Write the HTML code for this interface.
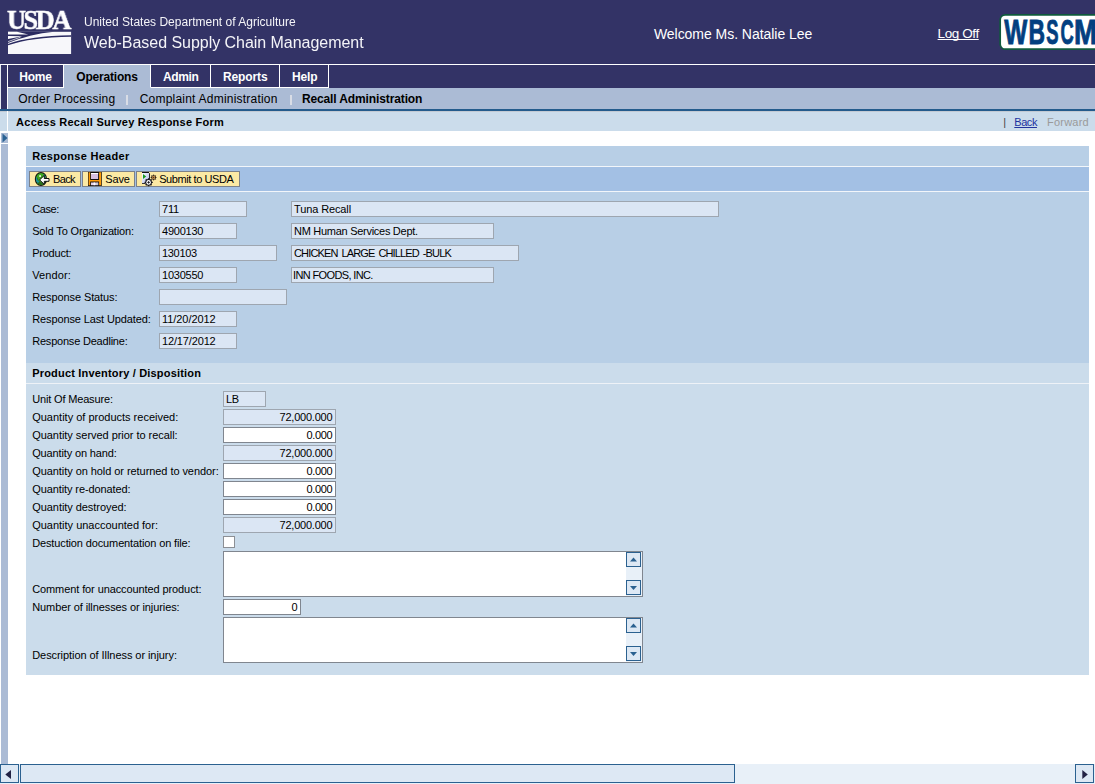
<!DOCTYPE html>
<html><head><meta charset="utf-8"><title>Access Recall Survey Response Form</title>
<style>
html,body{margin:0;padding:0;}
body{width:1095px;height:784px;overflow:hidden;position:relative;background:#fff;font-family:"Liberation Sans",sans-serif;font-size:11px;color:#000;}
.a{position:absolute;white-space:nowrap;}
.hdr{left:0;top:0;width:1095px;height:88px;background:#333366;}
.tab{top:65px;height:22px;border-right:1px solid #fff;border-bottom:1px solid #fff;}
.in{box-sizing:border-box;border:1px solid #9ea6b0;background:#dbe6f4;}
.in.e{background:#fff;border-color:#80868f;}
.btn{top:171px;height:16px;box-sizing:border-box;border:1px solid #7c8189;background:#fbe9a4;}
.sb{box-sizing:border-box;border:1px solid #2b6190;background:#dde8f4;width:15px;height:15px;}
</style></head><body>
<div class="a hdr"></div>
<div class="a" style="left:83.50px;top:15px;font-size:12px;line-height:14px;color:#f4f4f8;letter-spacing:0.004px;will-change:transform;">United States Department of Agriculture</div>
<div class="a" style="left:84.00px;top:34px;font-size:16px;line-height:17px;color:#f4f4f8;letter-spacing:-0.035px;will-change:transform;">Web-Based Supply Chain Management</div>
<div class="a" style="left:653.90px;top:26px;font-size:14px;line-height:16px;color:#fff;letter-spacing:-0.039px;">Welcome Ms. Natalie Lee</div>
<div class="a" style="left:937.60px;top:26px;font-size:13.5px;line-height:15px;color:#fff;letter-spacing:-0.414px;text-decoration:underline;text-decoration-skip-ink:none;text-underline-offset:1px;">Log Off</div>
<div class="a" style="left:0px;top:64px;width:1095px;height:1px;background:#fff;"></div>
<div class="a" style="left:0px;top:88px;width:8px;height:21px;background:#333366;"></div>
<div class="a" style="left:8px;top:88px;width:1087px;height:21px;background:#abbbd5;"></div>
<div class="a" style="left:0px;top:109px;width:1095px;height:2px;background:#245b8c;"></div>
<div class="a" style="left:0px;top:111px;width:1095px;height:1px;background:#c3cad3;"></div>
<div class="a" style="left:0px;top:65px;width:1px;height:44px;background:#e6ebf2;"></div>
<div class="a" style="left:7px;top:65px;width:1px;height:44px;background:#fff;"></div>
<div class="a tab" style="left:8px;width:55px;"></div>
<div class="a tab" style="left:64px;width:86px;background:#abbbd5;color:#000;border-bottom-color:#abbbd5;"></div>
<div class="a tab" style="left:151px;width:59px;"></div>
<div class="a tab" style="left:211px;width:68px;"></div>
<div class="a tab" style="left:280px;width:48px;"></div>
<div class="a" style="left:19.20px;top:70px;font-size:12px;line-height:14px;font-weight:bold;color:#fff;letter-spacing:-0.189px;">Home</div>
<div class="a" style="left:76.30px;top:70px;font-size:12px;line-height:14px;font-weight:bold;color:#000;letter-spacing:-0.197px;">Operations</div>
<div class="a" style="left:163.10px;top:70px;font-size:12px;line-height:14px;font-weight:bold;color:#fff;letter-spacing:-0.4px;">Admin</div>
<div class="a" style="left:223.00px;top:70px;font-size:12px;line-height:14px;font-weight:bold;color:#fff;letter-spacing:-0.128px;">Reports</div>
<div class="a" style="left:292.00px;top:70px;font-size:12px;line-height:14px;font-weight:bold;color:#fff;letter-spacing:-0.125px;">Help</div>
<div class="a" style="left:18.30px;top:92px;font-size:12px;line-height:14px;color:#000;letter-spacing:0.234px;">Order Processing</div>
<div class="a" style="left:126px;top:95px;width:2px;height:10px;background:#d9dde6;"></div>
<div class="a" style="left:139.70px;top:92px;font-size:12px;line-height:14px;color:#000;letter-spacing:0.217px;">Complaint Administration</div>
<div class="a" style="left:289.5px;top:95px;width:2px;height:10px;background:#d9dde6;"></div>
<div class="a" style="left:301.90px;top:92px;font-size:12px;line-height:14px;font-weight:bold;color:#000;letter-spacing:-0.121px;">Recall Administration</div>
<div class="a" style="left:0px;top:112px;width:1095px;height:19px;background:#cbdceb;"></div>
<div class="a" style="left:7px;top:111px;width:1px;height:20px;background:#fff;"></div>
<div class="a" style="left:16.10px;top:116px;font-size:11px;line-height:12px;font-weight:bold;letter-spacing:0.235px;">Access Recall Survey Response Form</div>
<div class="a" style="left:1003.20px;top:116px;font-size:11px;line-height:12px;color:#444;">|</div>
<div class="a" style="left:1014.30px;top:116px;font-size:11px;line-height:12px;color:#2233a0;letter-spacing:-0.452px;text-decoration:underline;text-decoration-skip-ink:none;">Back</div>
<div class="a" style="left:1047.10px;top:116px;font-size:11px;line-height:12px;color:#9a9a9a;letter-spacing:0.196px;">Forward</div>
<div class="a" style="left:1px;top:133px;width:7px;height:10px;background:#abbbd5;"></div>
<div class="a" style="left:1px;top:144px;width:7px;height:620px;background:#abbbd5;"></div>
<svg class="a" style="left:1px;top:133px;" width="7" height="10"><path d="M1.5 0.5 L6.5 5 L1.5 9.5 Z" fill="#2b6394"/></svg>
<div class="a" style="left:26px;top:146px;width:1063px;height:217px;background:#b8cfe6;"></div>
<div class="a" style="left:26px;top:166px;width:1063px;height:1px;background:#f2f6fa;"></div>
<div class="a" style="left:26px;top:167px;width:1063px;height:24px;background:#a3c0e4;"></div>
<div class="a" style="left:26px;top:191px;width:1063px;height:1px;background:#f2f6fa;"></div>
<div class="a" style="left:32.20px;top:150px;font-size:11px;line-height:12px;font-weight:bold;letter-spacing:0.29px;">Response Header</div>
<div class="a btn" style="left:29px;width:52px;"></div>
<div class="a btn" style="left:82px;width:53px;"></div>
<div class="a btn" style="left:136px;width:104px;"></div>
<div class="a" style="left:52.90px;top:173px;font-size:11px;line-height:12px;letter-spacing:-0.585px;">Back</div>
<div class="a" style="left:105.20px;top:173px;font-size:11px;line-height:12px;letter-spacing:-0.118px;">Save</div>
<div class="a" style="left:159.20px;top:173px;font-size:11px;line-height:12px;letter-spacing:-0.419px;">Submit to USDA</div>
<div class="a" style="left:32.20px;top:203px;font-size:11px;line-height:12px;letter-spacing:-0.42px;">Case:</div>
<div class="a in" style="left:159px;top:201px;width:88px;height:16px;"></div>
<div class="a" style="left:162.00px;top:203px;font-size:11px;line-height:12px;letter-spacing:-0.209px;">711</div>
<div class="a in" style="left:291px;top:201px;width:428px;height:16px;"></div>
<div class="a" style="left:294.00px;top:203px;font-size:11px;line-height:12px;letter-spacing:-0.114px;">Tuna Recall</div>
<div class="a" style="left:32.20px;top:225px;font-size:11px;line-height:12px;letter-spacing:-0.156px;">Sold To Organization:</div>
<div class="a in" style="left:159px;top:223px;width:78px;height:16px;"></div>
<div class="a" style="left:162.00px;top:225px;font-size:11px;line-height:12px;letter-spacing:-0.234px;">4900130</div>
<div class="a in" style="left:291px;top:223px;width:203px;height:16px;"></div>
<div class="a" style="left:294.00px;top:225px;font-size:11px;line-height:12px;letter-spacing:-0.28px;">NM Human Services Dept.</div>
<div class="a" style="left:32.20px;top:247px;font-size:11px;line-height:12px;letter-spacing:-0.23px;">Product:</div>
<div class="a in" style="left:159px;top:245px;width:118px;height:16px;"></div>
<div class="a" style="left:162.00px;top:247px;font-size:11px;line-height:12px;letter-spacing:-0.318px;">130103</div>
<div class="a in" style="left:291px;top:245px;width:228px;height:16px;"></div>
<div class="a" style="left:294.00px;top:247px;font-size:11px;line-height:12px;letter-spacing:-0.838px;word-spacing:1.6px;">CHICKEN LARGE CHILLED -BULK</div>
<div class="a" style="left:32.20px;top:269px;font-size:11px;line-height:12px;letter-spacing:0.106px;">Vendor:</div>
<div class="a in" style="left:159px;top:267px;width:78px;height:16px;"></div>
<div class="a" style="left:162.00px;top:269px;font-size:11px;line-height:12px;letter-spacing:-0.234px;">1030550</div>
<div class="a in" style="left:291px;top:267px;width:203px;height:16px;"></div>
<div class="a" style="left:293.00px;top:269px;font-size:11px;line-height:12px;letter-spacing:-0.633px;">INN FOODS, INC.</div>
<div class="a" style="left:32.20px;top:291px;font-size:11px;line-height:12px;letter-spacing:-0.098px;">Response Status:</div>
<div class="a in" style="left:159px;top:289px;width:128px;height:16px;"></div>
<div class="a" style="left:32.20px;top:313px;font-size:11px;line-height:12px;letter-spacing:-0.12px;">Response Last Updated:</div>
<div class="a in" style="left:159px;top:311px;width:78px;height:16px;"></div>
<div class="a" style="left:162.00px;top:313px;font-size:11px;line-height:12px;letter-spacing:-0.058px;">11/20/2012</div>
<div class="a" style="left:32.20px;top:335px;font-size:11px;line-height:12px;letter-spacing:-0.206px;">Response Deadline:</div>
<div class="a in" style="left:159px;top:333px;width:78px;height:16px;"></div>
<div class="a" style="left:162.00px;top:335px;font-size:11px;line-height:12px;letter-spacing:-0.148px;">12/17/2012</div>
<div class="a" style="left:26px;top:363px;width:1063px;height:312px;background:#cbdceb;"></div>
<div class="a" style="left:26px;top:383px;width:1063px;height:1px;background:#eef2f7;"></div>
<div class="a" style="left:32.20px;top:367px;font-size:11px;line-height:12px;font-weight:bold;letter-spacing:0.185px;">Product Inventory / Disposition</div>
<div class="a" style="left:32.20px;top:393px;font-size:11px;line-height:12px;letter-spacing:-0.159px;">Unit Of Measure:</div>
<div class="a in" style="left:223px;top:391px;width:43px;height:16px;"></div>
<div class="a" style="left:226.00px;top:393px;font-size:11px;line-height:12px;letter-spacing:-0.418px;">LB</div>
<div class="a" style="left:32.20px;top:411px;font-size:11px;line-height:12px;letter-spacing:-0.003px;">Quantity of products received:</div>
<div class="a in" style="left:223px;top:409px;width:113px;height:16px;"></div>
<div class="a" style="left:279.50px;top:411px;font-size:11px;line-height:12px;letter-spacing:-0.215px;">72,000.000</div>
<div class="a" style="left:32.20px;top:429px;font-size:11px;line-height:12px;letter-spacing:-0.041px;">Quantity served prior to recall:</div>
<div class="a in e" style="left:223px;top:427px;width:113px;height:16px;"></div>
<div class="a" style="left:306.50px;top:429px;font-size:11px;line-height:12px;letter-spacing:-0.352px;">0.000</div>
<div class="a" style="left:32.20px;top:447px;font-size:11px;line-height:12px;letter-spacing:-0.136px;">Quantity on hand:</div>
<div class="a in" style="left:223px;top:445px;width:113px;height:16px;"></div>
<div class="a" style="left:279.50px;top:447px;font-size:11px;line-height:12px;letter-spacing:-0.215px;">72,000.000</div>
<div class="a" style="left:32.20px;top:465px;font-size:11px;line-height:12px;letter-spacing:-0.063px;">Quantity on hold or returned to vendor:</div>
<div class="a in e" style="left:223px;top:463px;width:113px;height:16px;"></div>
<div class="a" style="left:306.50px;top:465px;font-size:11px;line-height:12px;letter-spacing:-0.352px;">0.000</div>
<div class="a" style="left:32.20px;top:483px;font-size:11px;line-height:12px;letter-spacing:-0.096px;">Quantity re-donated:</div>
<div class="a in e" style="left:223px;top:481px;width:113px;height:16px;"></div>
<div class="a" style="left:306.50px;top:483px;font-size:11px;line-height:12px;letter-spacing:-0.352px;">0.000</div>
<div class="a" style="left:32.20px;top:501px;font-size:11px;line-height:12px;letter-spacing:-0.052px;">Quantity destroyed:</div>
<div class="a in e" style="left:223px;top:499px;width:113px;height:16px;"></div>
<div class="a" style="left:306.50px;top:501px;font-size:11px;line-height:12px;letter-spacing:-0.352px;">0.000</div>
<div class="a" style="left:32.20px;top:519px;font-size:11px;line-height:12px;letter-spacing:-0.009px;">Quantity unaccounted for:</div>
<div class="a in" style="left:223px;top:517px;width:113px;height:16px;"></div>
<div class="a" style="left:279.50px;top:519px;font-size:11px;line-height:12px;letter-spacing:-0.215px;">72,000.000</div>
<div class="a" style="left:32.20px;top:537px;font-size:11px;line-height:12px;letter-spacing:-0.131px;">Destuction documentation on file:</div>
<div class="a" style="left:223px;top:536px;width:12px;height:12px;box-sizing:border-box;border:1px solid #8c8f94;background:#fff;"></div>
<div class="a" style="left:32.20px;top:583px;font-size:11px;line-height:12px;letter-spacing:-0.099px;">Comment for unaccounted product:</div>
<div class="a" style="left:32.20px;top:601px;font-size:11px;line-height:12px;letter-spacing:-0.095px;">Number of illnesses or injuries:</div>
<div class="a" style="left:32.20px;top:649px;font-size:11px;line-height:12px;letter-spacing:-0.061px;">Description of Illness or injury:</div>
<div class="a in e" style="left:223px;top:599px;width:78px;height:16px;"></div>
<div class="a" style="left:291.50px;top:601px;font-size:11px;line-height:12px;">0</div>
<div class="a in e" style="left:223px;top:551px;width:420px;height:46px;"></div>
<div class="a" style="left:626px;top:552px;width:16px;height:44px;background:#e8f0f8;"></div>
<div class="a sb" style="left:626px;top:552px;"></div>
<svg class="a" style="left:626px;top:552px;" width="15" height="15"><path d="M4 9.5 L7.5 5.5 L11 9.5 Z" fill="#2b6190"/></svg>
<div class="a sb" style="left:626px;top:580px;"></div>
<svg class="a" style="left:626px;top:580px;" width="15" height="15"><path d="M4 6 L7.5 10 L11 6 Z" fill="#2b6190"/></svg>
<div class="a in e" style="left:223px;top:617px;width:420px;height:46px;"></div>
<div class="a" style="left:626px;top:618px;width:16px;height:44px;background:#e8f0f8;"></div>
<div class="a sb" style="left:626px;top:618px;"></div>
<svg class="a" style="left:626px;top:618px;" width="15" height="15"><path d="M4 9.5 L7.5 5.5 L11 9.5 Z" fill="#2b6190"/></svg>
<div class="a sb" style="left:626px;top:646px;"></div>
<svg class="a" style="left:626px;top:646px;" width="15" height="15"><path d="M4 6 L7.5 10 L11 6 Z" fill="#2b6190"/></svg>
<div class="a" style="left:0px;top:764px;width:1095px;height:20px;background:#e8f0f8;"></div>
<div class="a" style="left:0;top:764px;width:19px;height:19px;box-sizing:border-box;border:1px solid #2b6190;background:#dde8f4;"></div>
<svg class="a" style="left:0;top:764px;" width="19" height="19"><path d="M11 5.9 L5.3 10.5 L11 15.1 Z" fill="#222244"/></svg>
<div class="a" style="left:20px;top:764px;width:715px;height:19px;box-sizing:border-box;border:1px solid #2b6190;background:#dde8f4;"></div>
<div class="a" style="left:1075px;top:764px;width:19px;height:19px;box-sizing:border-box;border:1px solid #2b6190;background:#dde8f4;"></div>
<svg class="a" style="left:1075px;top:764px;" width="19" height="19"><path d="M7.3 5.9 L12.8 10.5 L7.3 15.1 Z" fill="#222244"/></svg>
<!-- USDA logo -->
<div class="a" style="left:7px;top:4px;font-family:'Liberation Serif','DejaVu Serif',serif;font-weight:bold;font-size:28px;line-height:32px;color:#fff;letter-spacing:-2.6px;transform-origin:0 0;transform:scaleX(0.94);-webkit-text-stroke:0.5px #fff;will-change:transform;">USDA</div>
<svg class="a" style="left:0;top:28px;" width="80" height="30" viewBox="0 28 80 30">
<rect x="8" y="31.8" width="63.1" height="22.2" fill="#f7f7fa"/>
<path d="M8 31.8 L54 31.8 C 38 33.2 22 37.6 8 43 Z" fill="#2a2a60"/>
<path d="M8 31.8 L17 31.8 L28.3 34.5 L8 34.6 Z" fill="#fff"/>
<path d="M8 36 L22.4 36.2 L8 38.9 Z" fill="#fff"/>
<path d="M8 41.6 L20.5 37.2" stroke="#fff" stroke-width="0.7" fill="none"/>
<path d="M8 44.6 C 22 39.6 44 36.4 71.1 36" stroke="#2a2a60" stroke-width="1.3" fill="none"/>
</svg>
<!-- WBSCM logo -->
<svg class="a" style="left:990px;top:8px;" width="105" height="48" viewBox="990 8 105 48">
<rect x="1000.2" y="14.8" width="120" height="34.4" rx="5" ry="5" fill="#fff" stroke="#0f5a3c" stroke-width="1.7"/>
<g font-family="'Liberation Sans',sans-serif" font-weight="bold" font-size="34.8" fill="#033f80" stroke="#033f80" stroke-width="0.9">
<text x="1004.2" y="43.9" textLength="23" lengthAdjust="spacingAndGlyphs">W</text>
<text x="1028.6" y="43.9" textLength="16.5" lengthAdjust="spacingAndGlyphs">B</text>
<text x="1046.3" y="43.9" textLength="12.3" lengthAdjust="spacingAndGlyphs">S</text>
<text x="1060.4" y="43.9" textLength="13.2" lengthAdjust="spacingAndGlyphs">C</text>
<text x="1073.9" y="43.9" textLength="23" lengthAdjust="spacingAndGlyphs">M</text>
</g>
</svg>
<!-- back icon -->
<svg class="a" style="left:32px;top:170px;" width="20" height="18" viewBox="32 170 20 18">
<defs><clipPath id="gc"><ellipse cx="40.95" cy="178.95" rx="5.1" ry="5.95"/></clipPath></defs>
<ellipse cx="40.95" cy="178.95" rx="6.15" ry="7" fill="#111"/>
<g clip-path="url(#gc)">
<rect x="34" y="172" width="14" height="14" fill="#3ea722"/>
<path d="M34 178 L37.5 177.5 L38.5 180.5 L41 182.5 L44 182 L48 183 L48 187 L34 187 Z" fill="#2b6c1a"/>
<path d="M34.5 177.5 L36.5 177 L37.5 180 L39.5 181.6 L38 183 L36 182 Z" fill="#16909c"/>
<path d="M43.5 173.5 L46 174.5 L46.8 177.5 L44.5 177.2 Z" fill="#16909c"/>
</g>
<rect x="39.3" y="175.2" width="1.6" height="1.7" fill="#fff"/>
<path d="M39.6 179.9 L44.3 175.4 L44.3 178.5 L49 178.5 L49 181.3 L44.3 181.3 L44.3 184.4 Z" fill="#fff" stroke="#111" stroke-width="1" stroke-linejoin="miter"/>
</svg>
<!-- save icon -->
<svg class="a" style="left:86px;top:171px;" width="18" height="16" viewBox="86 171 18 16">
<rect x="88" y="172" width="13.8" height="14" fill="#141414"/>
<rect x="88.6" y="172.3" width="12.5" height="13" fill="#ff9c0a"/>
<rect x="90.2" y="172" width="8.9" height="8" fill="#111"/>
<rect x="91" y="173" width="7.1" height="6" fill="#d5c0e1"/>
<rect x="91" y="173" width="7.1" height="1" fill="#fff"/>
<rect x="90.2" y="181.5" width="8.9" height="4.5" fill="#111"/>
<rect x="91" y="182.5" width="7.3" height="2.7" fill="#e3d1ec"/>
<rect x="93.6" y="182.5" width="1.5" height="2.7" fill="#fff"/>
<rect x="96.4" y="182.8" width="1.6" height="2.2" fill="#c9c9cf"/>
</svg>
<!-- submit icon -->
<svg class="a" style="left:140px;top:170px;" width="20" height="18" viewBox="140 170 20 18">
<defs><linearGradient id="dg" x1="0" y1="0" x2="1" y2="1"><stop offset="0" stop-color="#ffffff"/><stop offset="1" stop-color="#a9b4e6"/></linearGradient></defs>
<rect x="142" y="172.6" width="7" height="10.9" fill="url(#dg)"/>
<rect x="142" y="172" width="7" height="1" fill="#111"/>
<rect x="149" y="173.2" width="0.9" height="6" fill="#111"/>
<rect x="142" y="183" width="3.2" height="0.9" fill="#222"/>
<path d="M143 174 L146.2 176.5 L143 179 Z" fill="#15961a"/>
<g stroke="#15151c" stroke-width="1.3" stroke-linecap="butt">
<path d="M148.6 178.3 V186.3 M144.6 182.4 H152.8 M145.7 179.5 L151.5 185.3 M151.5 179.5 L145.7 185.3"/>
</g>
<circle cx="148.6" cy="182.4" r="3.3" fill="#15151c"/>
<circle cx="148.6" cy="182.4" r="2.3" fill="#fff"/>
<path d="M147.4 182.4 H149.8 M148.6 181.2 V183.6" stroke="#15151c" stroke-width="1"/>
<g stroke="#2a1c10" stroke-width="0.9">
<path d="M153.6 174.6 V180.4 M150.7 177.5 H156.5 M151.6 175.5 L155.6 179.5 M155.6 175.5 L151.6 179.5"/>
</g>
<rect x="151.5" y="175.4" width="4.2" height="4.2" rx="0.8" fill="#2a1c10"/>
<rect x="152.2" y="176.1" width="2.8" height="2.8" fill="#c48d4c"/>
<rect x="153.2" y="177.1" width="0.9" height="0.9" fill="#2a1c10"/>
</svg>

</body></html>
